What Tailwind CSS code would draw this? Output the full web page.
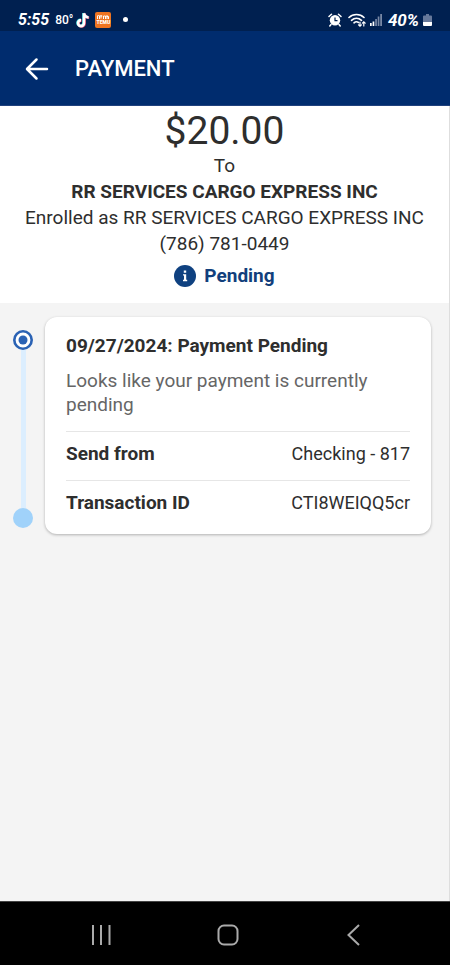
<!DOCTYPE html>
<html lang="en">
<head>
<meta charset="utf-8">
<meta name="viewport" content="width=device-width, initial-scale=1">
<title>Payment</title>
<script src="https://cdn.jsdelivr.net/npm/@tailwindcss/browser@4"></script>
</head>
<body class="flex min-h-screen flex-col bg-[#f4f4f4] font-[Roboto,'Liberation_Sans',sans-serif] text-[#2e2e2e]">
  <div class="flex h-[31px] items-center justify-between bg-[#002050] pt-2 pr-[18px] pl-[18px] text-white">
    <div class="flex items-center gap-1.5">
      <span class="text-base leading-5 font-bold italic">5:55</span>
      <span class="text-xs leading-5 font-medium">80°</span>
      <svg class="-ml-1 h-4 w-4" viewBox="0 0 16 16" fill="none" stroke-width="2.6" aria-label="TikTok" role="img">
        <path d="M8.4 1v9.8a3 3 0 1 1-3-3M8.4 1c.4 2.500 2 4 4.600 4.200" stroke="#35d6d8"/>
        <path d="M9.600 1.600v9.800a3 3 0 1 1-3-3M9.600 1.600c.4 2.500 2 4 4.600 4.200" stroke="#e8486a"/>
        <path d="M9 1.300v9.800a3 3 0 1 1-3-3M9 1.300c.4 2.500 2 4 4.600 4.200" stroke="#fff"/>
      </svg>
      <span class="-ml-0.5 flex h-4 w-4 flex-col items-center justify-center rounded-xs bg-[#ee7421]">
        <svg class="h-1.5 w-3" viewBox="0 0 12 6" fill="none" stroke="#fff" aria-hidden="true"><path d="M.5 5V2l1-1 1 1v3M4 1v3.500M3.300 2h2M6.500 5V2h2v3M10 1v4M9.500 2.500h2V5"/></svg>
        <span class="text-[5px] leading-[5px] font-black">TEMU</span>
      </span>
      <span class="ml-1.5 h-[5px] w-[5px] rounded-full bg-white"></span>
    </div>
    <div class="flex items-center gap-1">
      <svg class="h-3.5 w-3.5" viewBox="0 0 14 14" aria-label="Alarm" role="img">
        <path d="M1 3.500 3.500 1.200M13 3.500 10.500 1.200M3 11.500 1.800 13M11 11.500l1.200 1.500" stroke="#fff" stroke-width="1.500" stroke-linecap="round"/>
        <circle cx="7" cy="7.300" r="5.200" fill="#fff"/>
        <path d="M7 4.500v3.200h2.500" fill="none" stroke="#002050" stroke-width="1.200"/>
      </svg>
      <svg class="ml-0.5 h-3.5 w-[18px]" viewBox="0 0 18 14" fill="none" stroke="#fff" stroke-width="1.600" stroke-linecap="round" aria-label="Wi-Fi" role="img">
        <path d="M1 4.500c4-4 11-4 15 0M3.500 7.300c3-2.700 7-2.700 10 0M6 9.800c1.500-1.300 3.200-1.300 4.500-.3"/>
        <path d="M12 9v4m-1.500-1.200L12 13.200l1.400-1.400M15.800 13V9m-1.400 1.200 1.400-1.400 1.400 1.400" stroke-width="1.200"/>
      </svg>
      <svg class="h-3 w-3" viewBox="0 0 12 12" aria-label="Signal" role="img">
        <path d="M0 9h1.700v3H0zM2.600 7.500h1.700V12H2.600z" fill="#fff"/>
        <path d="M5.200 5h1.700v7H5.200zM7.700 2.500h1.700V12H7.700zM10.200 0h1.800v12h-1.800z" fill="#7888a5"/>
      </svg>
      <span class="ml-0.5 text-[17px] leading-5 font-bold italic">40%</span>
      <svg class="h-3 w-[9px]" viewBox="0 0 9 12" aria-label="Battery" role="img">
        <path d="M3 0h3v1.500h2a1 1 0 0 1 1 1V8H0V2.500a1 1 0 0 1 1-1h2z" fill="#66789a"/>
        <path d="M0 8h9v3a1 1 0 0 1-1 1H1a1 1 0 0 1-1-1z" fill="#fff"/>
      </svg>
    </div>
  </div>

  <header class="flex h-[75px] items-center gap-6 border-b border-[#20417d] bg-[#002c6e] px-[23px] pt-0.5 text-white">
    <button type="button" aria-label="Back" class="flex h-7 w-7 items-center justify-center">
      <svg class="h-6 w-6" viewBox="0 0 24 24" fill="none" stroke="currentColor" stroke-width="2.500" stroke-linecap="round" stroke-linejoin="round"><path d="M22 12H3M11.500 2.500 2 12l9.500 9.500"/></svg>
    </button>
    <h1 class="text-[22px] leading-7 font-medium">PAYMENT</h1>
  </header>

  <main class="flex-1 border-r border-[#dedede]">
    <section class="flex flex-col items-center bg-white pt-1 pb-3.5 text-center text-[19px] leading-[26px]">
      <p class="text-[39px] leading-[43px]">$20.00</p>
      <p>To</p>
      <p class="font-bold">RR SERVICES CARGO EXPRESS INC</p>
      <p>Enrolled as RR SERVICES CARGO EXPRESS INC</p>
      <p>(786) 781-0449</p>
      <p class="mt-1.5 flex items-center gap-2 font-bold text-[#123f7c]">
        <svg class="h-[22px] w-[22px]" viewBox="0 0 22 22" aria-hidden="true">
          <circle cx="11" cy="11" r="11" fill="#0f4180"/>
          <path d="M9.800 5.500h2.400v2.300H9.800zM9 9.200h3.200v5.600h1V16.300H9v-1.500h1v-4.200H9z" fill="#fff"/>
        </svg>
        Pending
      </p>
    </section>

    <section class="flex gap-3 pt-3.5 pr-[18px] pl-[13px]">
      <div class="flex flex-col items-center pt-[13px] pb-1.5" aria-hidden="true">
        <svg class="h-5 w-5" viewBox="0 0 20 20"><circle cx="10" cy="10" r="8.700" fill="#fff" stroke="#2a62b4" stroke-width="2.600"/><circle cx="10" cy="10" r="4.500" fill="#2a62b4"/></svg>
        <span class="w-[5px] flex-1 bg-[#dceefe]"></span>
        <span class="h-5 w-5 rounded-full bg-[#a0d2fa]"></span>
      </div>
      <article class="flex-1 rounded-xl bg-white px-[21px] pt-[17px] pb-[5px] text-[19px] leading-6 shadow-[0_1px_3px_rgba(0,0,0,0.28)]">
        <h2 class="font-bold">09/27/2024: Payment Pending</h2>
        <p class="mt-[11px] mb-3.5 text-[#666]">Looks like your payment is currently pending</p>
        <dl>
          <div class="flex justify-between border-t border-[#e6e6e6] pt-2.5 pb-3.5">
            <dt class="font-bold">Send from</dt>
            <dd class="text-lg leading-6">Checking - 817</dd>
          </div>
          <div class="flex justify-between border-t border-[#e6e6e6] pt-2.5 pb-3.5">
            <dt class="font-bold">Transaction ID</dt>
            <dd class="text-lg leading-6">CTI8WEIQQ5cr</dd>
          </div>
        </dl>
      </article>
    </section>
  </main>

  <nav aria-label="System navigation" class="flex h-16 items-center justify-between border-t border-[#444] bg-black pr-20 pl-[85px] pt-0.5 text-[#aaa]">
    <button type="button" aria-label="Recent apps" class="flex h-8 w-8 items-center justify-center">
      <svg class="h-[22px] w-[22px]" viewBox="0 0 22 22" stroke="currentColor" stroke-width="2"><path d="M3 1v20M11 1v20M19.500 1v20"/></svg>
    </button>
    <button type="button" aria-label="Home" class="flex h-8 w-8 items-center justify-center">
      <svg class="h-[22px] w-[22px]" viewBox="0 0 22 22" fill="none" stroke="currentColor" stroke-width="2"><rect x="1.500" y="1.500" width="19" height="19" rx="5.500"/></svg>
    </button>
    <button type="button" aria-label="Back" class="flex h-8 w-8 items-center justify-center">
      <svg class="h-[22px] w-[22px]" viewBox="0 0 22 22" fill="none" stroke="currentColor" stroke-width="2"><path d="M16 1 5.500 11 16 21"/></svg>
    </button>
  </nav>
</body>
</html>
